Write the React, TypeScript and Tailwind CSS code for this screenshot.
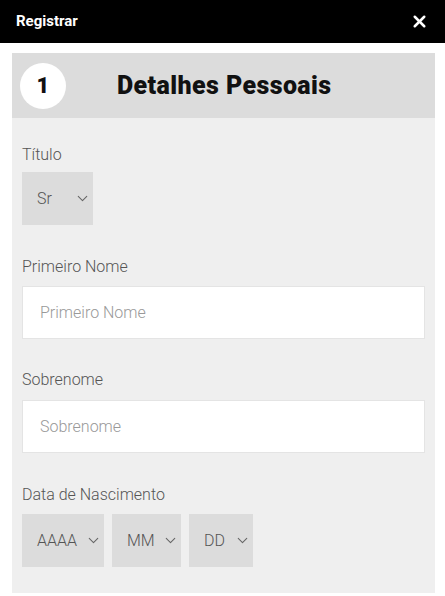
import { ChevronDown, X } from 'lucide-react';

const Select = ({ value, width }: { value: string; width: string }) => (
  <div
    className={`${width} h-[53px] bg-[#dcdcdc] flex items-center justify-between pl-[15px] pr-[2px] text-[16px] font-light text-[#555]`}
  >
    <span>{value}</span>
    <ChevronDown className="w-[17px] h-[17px] text-[#666]" strokeWidth={1.5} />
  </div>
);

const TextInput = ({ placeholder }: { placeholder: string }) => (
  <div className="w-[403px] h-[53px] bg-white border border-[#e4e4e4] flex items-center pl-[17px] text-[16px] font-light text-[#999]">
    {placeholder}
  </div>
);

const Label = ({ children }: { children: string }) => (
  <div className="h-[20px] leading-[20px] text-[16px] font-light text-[#555]">{children}</div>
);

export default function App() {
  return (
    <div className="w-[445px] h-[596px] bg-white font-['Roboto',sans-serif] overflow-hidden">
      <div className="h-[43px] bg-black flex items-center justify-between pl-[16px] pr-[16px]">
        <span className="text-white text-[15px] font-bold">Registrar</span>
        <X className="w-[19px] h-[19px] text-white" strokeWidth={3.2} />
      </div>
      <div className="mt-[10px] mx-[12px] w-[423px] bg-[#efefef]">
        <div className="h-[65px] bg-[#dcdcdc] flex items-center pl-[8px]">
          <div className="w-[46px] h-[46px] rounded-full bg-white flex items-center justify-center text-[22px] font-black text-[#111]">
            1
          </div>
          <span className="ml-[51px] text-[25px] font-black text-[#111] tracking-[0.4px]">Detalhes Pessoais</span>
        </div>
        <div className="pl-[10px] pt-[27px] pb-[26px]">
          <Label>Título</Label>
          <div className="mt-[7px]">
            <Select value="Sr" width="w-[71px]" />
          </div>
          <div className="mt-[32px]">
            <Label>Primeiro Nome</Label>
          </div>
          <div className="mt-[9px]">
            <TextInput placeholder="Primeiro Nome" />
          </div>
          <div className="mt-[31px]">
            <Label>Sobrenome</Label>
          </div>
          <div className="mt-[10px]">
            <TextInput placeholder="Sobrenome" />
          </div>
          <div className="mt-[32px]">
            <Label>Data de Nascimento</Label>
          </div>
          <div className="mt-[9px] flex gap-[8px]">
            <Select value="AAAA" width="w-[82px]" />
            <Select value="MM" width="w-[69px]" />
            <Select value="DD" width="w-[64px]" />
          </div>
        </div>
      </div>
    </div>
  );
}
